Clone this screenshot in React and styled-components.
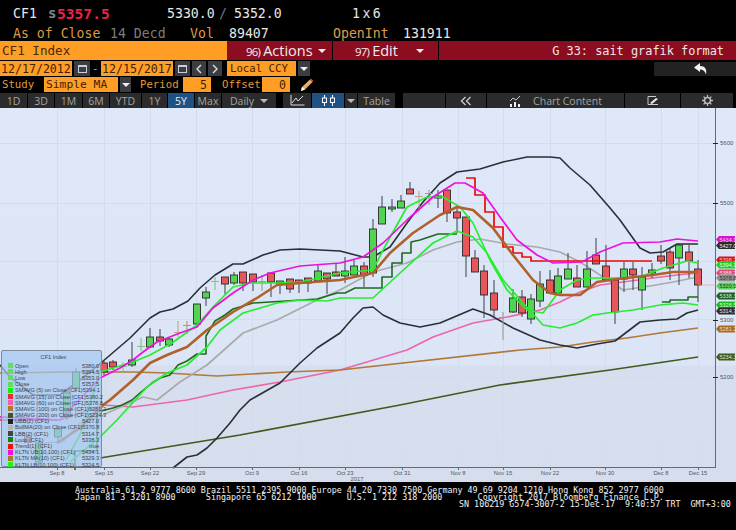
import React from "react"
import styled, { createGlobalStyle } from "styled-components"

const GlobalStyle = createGlobalStyle`
  html, body { margin: 0; padding: 0; background: #000; }
  #root { width: 736px; height: 530px; overflow: hidden; }
`

const mono = `"DejaVu Sans Mono", "Liberation Mono", monospace`
const sans = `"Open Sans", "Liberation Sans", sans-serif`
const orange = "#ff9d25"

const Page = styled.div`
  width: 736px;
  height: 530px;
  background: #000;
  display: flex;
  flex-direction: column;
  overflow: hidden;
`

const QuoteRow = styled.div`
  height: ${p => p.$h}px;
  display: flex;
  align-items: center;
  padding-left: 13px;
  font-family: ${mono};
  font-size: 13.2px;
  white-space: pre;
`

const Quote = styled.span`
  width: ${p => p.$w}px;
  flex: none;
  color: ${p => p.$color || "#e8e8e8"};
  font-weight: ${p => (p.$bold ? 700 : 400)};
  font-size: ${p => p.$size || 13.2}px;
  word-spacing: ${p => p.$tight ? -5.5 : 0}px;
`

const TitleRow = styled.div`
  height: 19px;
  display: flex;
`

const IndexBox = styled.div`
  width: 227px;
  background: ${orange};
  color: #4b2a05;
  font-family: ${mono};
  font-size: 12.6px;
  line-height: 20px;
  padding-left: 2px;
  box-sizing: border-box;
`

const MenuButton = styled.div`
  width: ${p => p.$w}px;
  margin-right: 1px;
  padding-left: ${p => p.$pad}px;
  box-sizing: border-box;
  background: #8c0c20;
  color: #eee;
  font-family: ${sans};
  font-size: 14.5px;
  white-space: nowrap;
  display: flex;
  align-items: center;
  gap: ${p => p.$gap}px;
`

const MenuNumber = styled.span`
  font-size: 11.5px;
  letter-spacing: -0.8px;
  margin-right: 3px;
`

const Caret = styled.span`
  width: 0;
  height: 0;
  border-left: 4px solid transparent;
  border-right: 4px solid transparent;
  border-top: 4px solid ${p => p.$color || "#eee"};
`

const FormatTitle = styled.div`
  flex: 1;
  background: #8c0c20;
  color: #f0e6e6;
  font-family: ${mono};
  font-size: 11.9px;
  line-height: 21px;
  text-align: right;
  padding-right: 12px;
`

const FormRow = styled.div`
  height: ${p => p.$h}px;
  display: flex;
  align-items: center;
  gap: 2px;
`

const Field = styled.div`
  width: ${p => p.$w}px;
  height: 15px;
  margin-left: ${p => p.$ml || 0}px;
  background: ${orange};
  color: #3e2304;
  font-family: ${mono};
  font-size: ${p => p.$size || 11.6}px;
  line-height: 16px;
  white-space: pre;
  text-align: ${p => p.$align || "left"};
  padding: 0 ${p => (p.$align ? 4 : p.$pad || 1)}px;
  box-sizing: border-box;
  flex: none;
`

const SmallButton = styled.div`
  width: ${p => p.$w || 15}px;
  height: 15px;
  margin-left: ${p => p.$ml || 0}px;
  background: ${p => (p.$bare ? "none" : "#3a3d42")};
  color: #ddd;
  display: flex;
  align-items: center;
  justify-content: center;
  flex: none;
`

const Label = styled.span`
  width: ${p => p.$w}px;
  margin-left: ${p => p.$ml || 0}px;
  flex: none;
  color: #e09a3c;
  font-family: ${mono};
  font-size: 10.7px;
  white-space: pre;
`

const BackButton = styled.div`
  width: 82px;
  height: 14px;
  margin-left: auto;
  background: #222;
  display: flex;
  align-items: center;
  justify-content: center;
  padding-left: 12px;
  box-sizing: border-box;
`

const TabRow = styled.div`
  height: 16px;
  display: flex;
  padding-top: 1px;
  box-sizing: border-box;
`

const Tab = styled.div`
  width: ${p => p.$w}px;
  margin-left: ${p => p.$ml || 0}px;
  margin-right: 1px;
  flex: none;
  background: ${p => (p.$active ? "#1f5284" : "#2b2b2b")};
  color: ${p => (p.$active ? "#e8eef5" : "#a5a5a5")};
  font-family: ${sans};
  font-size: 10.5px;
  display: flex;
  align-items: center;
  justify-content: center;
  gap: ${p => p.$gap || 6}px;
`

const ChartPanel = styled.div`
  position: relative;
  height: 374px;
  background: linear-gradient(#dfe8f9 0, #dbe5f6 257px, #d6dfef 258px, #d6deee 100%);
`

const ChartSvg = styled.svg`
  display: block;
  font-family: "Liberation Sans", sans-serif;
`

const Legend = styled.div`
  position: absolute;
  left: 1px;
  top: 242px;
  width: 101px;
  height: 117px;
  box-sizing: border-box;
  padding: 3px 2px 0 6px;
  background: rgba(165, 200, 240, 0.72);
  border: 1px solid #7d8a98;
  border-radius: 2px;
  font-family: "Liberation Sans", sans-serif;
  font-size: 5.6px;
  color: #37434f;
`

const LegendTitle = styled.div`
  text-align: center;
  height: 7px;
  line-height: 7px;
  margin-bottom: 1.5px;
`

const LegendRow = styled.div`
  display: flex;
  align-items: center;
  height: 6.2px;
  white-space: pre;
`

const Swatch = styled.span`
  width: 5px;
  height: 5px;
  margin-right: 2px;
  flex: none;
  background: ${p => p.$color};
`

const LegendValue = styled.span`
  margin-left: auto;
`

const Footer = styled.div`
  flex: 1;
  padding-top: 5px;
  font-family: ${mono};
  font-size: 8.37px;
  line-height: 7px;
  color: #f2f2f2;
  white-space: pre;
`

const FooterLine = styled.div`
  padding-left: ${p => p.$left}px;
`

const CalendarIcon = () => (
  <svg width="9" height="9" viewBox="0 0 9 9">
    <rect x="0.5" y="1.5" width="8" height="7" fill="none" stroke="#ccd" />
    <rect x="0.5" y="1" width="8" height="2" fill="#ccd" />
  </svg>
)

const Arrow = ({ left }) => (
  <svg width="8" height="10" viewBox="0 0 8 10">
    <path d={left ? "M6 1 L2 5 L6 9" : "M2 1 L6 5 L2 9"} fill="none" stroke="#ddd" strokeWidth="1.4" />
  </svg>
)

const DoubleArrow = () => (
  <svg width="12" height="10" viewBox="0 0 12 10">
    <path d="M5.5 1 L1.5 5 L5.5 9 M10.5 1 L6.5 5 L10.5 9" fill="none" stroke="#ccc" strokeWidth="1.3" />
  </svg>
)

const TabCaret = () => <Caret $color="#bbb" />

const LineIcon = () => (
  <svg width="15" height="11" viewBox="0 0 15 11">
    <path d="M1 0 V10 H14.5" fill="none" stroke="#ddd" />
    <path d="M2 8 L6 3 L8 6 L13 1" fill="none" stroke="#ddd" />
  </svg>
)

const CandleIcon = () => (
  <svg width="15" height="11" viewBox="0 0 15 11">
    <path d="M3.5 0 V11 M11.5 0 V11" stroke="#fff" />
    <rect x="1.5" y="3" width="4" height="4.5" fill="#1f5284" stroke="#fff" />
    <rect x="9.5" y="3" width="4" height="4.5" fill="#1f5284" stroke="#fff" />
  </svg>
)

const StudyIcon = () => (
  <svg width="12" height="12" viewBox="0 0 12 12">
    <path d="M1 6 L4 3 L7 5 L11 1" fill="none" stroke="#ccc" />
    <path d="M1 9 H3 V12 H1 Z M5 7 H7 V12 H5 Z M9 9 H11 V12 H9 Z" fill="#eee" />
  </svg>
)

const EditIcon = () => (
  <svg width="12" height="9" viewBox="0 0 12 9">
    <path d="M1 0.5 H9 M1 0.5 V8.5 H11" fill="none" stroke="#ccc" />
    <path d="M3 7 L9 2 L11 3 L5 8 Z" fill="#eee" />
  </svg>
)

const GearIcon = () => (
  <svg width="11" height="11" viewBox="0 0 11 11">
    <circle cx="5.5" cy="5.5" r="3" fill="none" stroke="#bbb" strokeWidth="1.6" />
    <path d="M5.5 0 V2 M5.5 9 V11 M0 5.5 H2 M9 5.5 H11 M1.6 1.6 L3 3 M8 8 L9.4 9.4 M9.4 1.6 L8 3 M3 8 L1.6 9.4" stroke="#bbb" strokeWidth="1.3" />
  </svg>
)

const UndoIcon = () => (
  <svg width="14" height="12" viewBox="0 0 14 12">
    <path d="M0 4.5 L6 0 V3 C11 3 13 6 12 11.5 C11 8 9 6.5 6 6.5 V9 Z" fill="#f4f4f4" />
  </svg>
)

const PencilIcon = () => (
  <svg width="14" height="14" viewBox="0 0 14 14">
    <path d="M1 13 L2 9 L10 1.5 L12.5 4 L5 11.5 Z" fill="#e8b060" />
    <path d="M1 13 L2 9 L5 11.5 Z" fill="#fff" />
    <path d="M10 1.5 L12.5 4 L13.5 3 L11 0.5 Z" fill="#d84a20" />
  </svg>
)

const tabs = [
  ["1D", 27], ["3D", 26], ["1M", 27], ["6M", 26], ["YTD", 31], ["1Y", 25], ["5Y", 26, true], ["Max", 26],
]

const upper = "0,365 10,377 33,395 60,395 80,380 102,362 130,338 150,318 160,312 173,309 188,301 200,288 215,275 233,264 243,264 263,255 280,250 300,249 340,251 363,257 373,257 390,247 407,223 423,202 440,183 457,172 480,169 503,162 527,157 550,157 560,158 570,168 590,185 610,208 620,220 640,248 650,253 663,252 677,244 698,244"
const lower = "173,468 187,457 197,455 207,448 217,438 230,423 240,410 250,400 280,383 300,363 317,348 340,333 353,318 363,308 373,307 383,315 400,323 420,327 440,323 473,309 490,315 513,328 540,340 560,345 577,348 597,344 615,341 640,322 660,320 677,319 687,313 698,310"
const magenta = "0,417 60,420 100,378 120,368 133,360 143,352 157,342 180,333 197,327 213,308 233,293 253,280 270,273 300,266 340,263 363,257 383,243 407,220 433,197 455,183 465,183 483,193 500,217 517,240 537,255 553,263 582,262 600,252 623,243 660,242 677,239 698,241"
const brownThick = "57,443 80,428 103,405 110,400 133,380 150,363 167,355 187,347 207,330 233,312 257,298 277,285 300,283 340,280 373,273 390,253 413,233 440,215 457,207 473,210 493,228 513,255 533,280 550,293 560,295 580,295 597,282 617,279 653,275 673,272 698,272"
const greenUpper = "66,460 80,435 100,372 133,362 150,355 172,343 197,325 213,307 233,287 250,283 277,283 300,282 340,273 373,270 383,250 407,207 427,197 443,197 460,207 473,223 490,260 507,290 527,310 543,313 560,290 577,280 593,278 617,278 640,277 663,268 687,261 698,263"
const greenLower = "70,462 100,437 117,420 147,387 167,373 187,365 207,347 220,330 243,313 277,303 300,300 327,301 340,298 373,298 400,273 433,243 457,231 473,237 487,253 503,280 523,303 543,325 560,328 577,323 593,315 607,313 633,310 660,305 683,303 698,305"
const gray = "40,443 63,442 80,423 103,415 143,397 157,400 180,382 207,365 243,333 277,320 313,302 340,290 373,272 407,263 433,250 457,242 480,239 507,244 537,247 560,252 580,262 600,275 623,290 650,286 673,282 698,277"
const pink = "0,417 60,420 103,405 133,407 187,400 233,390 280,382 340,370 407,350 433,337 473,323 507,317 540,310 560,302 580,292 600,285 623,282 653,278 677,275 698,273"
const brown = "0,373 67,372 133,372 167,373 217,376 287,372 340,370 520,350 560,347 593,342 627,338 660,333 698,328"
const darkGreen = "100,458 240,435 400,405 500,385 610,370 698,357"
const steps = "75,470 75,451 97,451 97,412 113,408 122,405 132,400 141,392 152,383 160,378 170,375 178,365 187,361 197,354 206,354 206,336 215,321 225,315 233,309 243,306 253,303 270,302 317,299 337,293 345,293 355,288 382,288 382,277 392,277 392,263 402,263 402,253 411,253 411,242 420,240 429,237 438,234 457,234"
const stepsEnd = "662,302 670,302 670,300 688,300 688,297 698,297"
const redSteps = "466,178 475,178 475,195 485,195 485,212 494,212 494,227 503,227 503,247 513,247 513,253 522,253 522,257 531,257 531,261 652,261"

const lines = [
  { points: pink, color: "#ee66aa", width: 1.7 },
  { points: brown, color: "#b0793a", width: 1.7 },
  { points: darkGreen, color: "#3f5a1c", width: 1.6 },
  { points: gray, color: "#aaaaaa", width: 1.7 },
  { points: lower, color: "#2b2f33", width: 1.6 },
  { points: upper, color: "#2b2f33", width: 1.6 },
  { points: steps, color: "#1d6a1d", width: 1.6 },
  { points: stepsEnd, color: "#1d6a1d", width: 1.6 },
]

const topLines = [
  { points: greenLower, color: "#25ee30", width: 1.7 },
  { points: redSteps, color: "#ee0808", width: 1.7 },
  { points: greenUpper, color: "#25ee30", width: 1.7 },
  { points: magenta, color: "#ee10dc", width: 1.7 },
  { points: brownThick, color: "#b0602a", width: 2.6 },
]

// x, body top, body bottom, wick top, wick bottom, kind
const candles = [
  [28, 437, 442, 434, 445, "r"], [39, 443, 462, 440, 466, "g"], [58, 429, 437, 425, 442, "g"], [67, 393, 417, 388, 420, "g"], [76, 372, 388, 368, 392, "g"],
  [104, 363, 372, 361, 375, "r"], [113, 362, 367, 360, 370, "r"], [123, 366, 367, 362, 373, "x"], [132, 360, 365, 342, 367, "g"],
  [141, 346, 347, 338, 351, "x"], [150, 337, 347, 328, 348, "g"], [160, 337, 341, 329, 346, "r"], [169, 339, 345, 337, 347, "g"],
  [178, 332, 333, 321, 337, "t"], [187, 325, 326, 321, 334, "o"], [197, 304, 324, 304, 327, "g"], [206, 292, 298, 287, 306, "g"],
  [215, 281, 282, 277, 290, "x"], [225, 277, 284, 277, 294, "r"], [234, 275, 283, 272, 285, "g"], [243, 272, 283, 272, 291, "r"],
  [253, 274, 282, 274, 291, "r"], [262, 281, 282, 275, 291, "y"], [271, 273, 282, 273, 297, "r"], [280, 281, 283, 281, 294, "g"],
  [290, 279, 289, 279, 293, "r"], [299, 280, 283, 280, 293, "r"], [308, 278, 283, 278, 292, "r"], [318, 271, 281, 265, 281, "g"],
  [327, 273, 279, 273, 294, "r"], [336, 272, 276, 264, 276, "r"], [345, 271, 276, 257, 283, "g"], [354, 266, 275, 260, 275, "g"],
  [364, 266, 275, 262, 287, "r"], [373, 229, 273, 219, 277, "g"], [382, 207, 224, 196, 224, "g"], [392, 207, 209, 199, 212, "g"],
  [401, 201, 208, 195, 208, "g"], [410, 189, 194, 182, 194, "r"], [419, 196, 197, 191, 212, "t"], [429, 193, 194, 190, 205, "y"],
  [438, 196, 198, 190, 208, "g"], [447, 190, 213, 190, 222, "r"], [457, 212, 218, 207, 233, "r"], [466, 217, 256, 217, 277, "r"],
  [475, 258, 272, 250, 272, "r"], [484, 271, 295, 265, 318, "r"], [494, 293, 310, 280, 318, "r"], [503, 317, 318, 312, 340, "y"],
  [513, 298, 312, 289, 313, "g"], [522, 297, 313, 290, 317, "r"], [531, 299, 319, 294, 324, "g"], [540, 284, 301, 271, 307, "g"],
  [550, 280, 293, 270, 293, "r"], [558, 276, 293, 268, 293, "g"], [568, 269, 279, 253, 279, "g"], [577, 278, 287, 265, 287, "r"],
  [587, 269, 287, 251, 287, "g"], [596, 255, 264, 238, 264, "r"], [606, 266, 280, 245, 280, "r"], [615, 280, 312, 280, 324, "r"],
  [624, 269, 279, 262, 292, "g"], [633, 269, 275, 262, 290, "r"], [642, 277, 290, 267, 310, "g"], [652, 270, 273, 263, 278, "g"],
  [661, 256, 261, 245, 264, "r"], [670, 252, 268, 248, 280, "r"], [679, 245, 258, 243, 285, "g"], [689, 252, 261, 245, 278, "r"],
  [698, 269, 285, 260, 302, "r"],
]

const crossColors = { x: "#7fc47f", t: "#b9a98a", o: "#d88a55", y: "#9a9a9a" }

const dates = [
  ["Sep 8", 57], ["Sep 15", 104], ["Sep 22", 150], ["Sep 29", 196], ["Oct 9", 252], ["Oct 16", 299], ["Oct 23", 345],
  ["Oct 31", 402], ["Nov 8", 458], ["Nov 15", 503], ["Nov 22", 550], ["Nov 30", 605], ["Dec 8", 661], ["Dec 15", 698],
]

const chips = [
  [239.5, "#e010d0", "5434.1", "#f0c0ee"], [245.5, "#2a2a2a", "5427.0", "#e8e8e8"], [260, "#dd1111", "5398.2", "#f5c0c0"],
  [265, "#22cc22", "5394.1", "#e8ffe8"], [273, "#e04a7a", "5388.2", "#ffe0e8"], [278, "#8f8f8f", "5378.8", "#333"],
  [286, "#5fd05f", "5320.5", "#1c3c1c"], [296, "#1d5c1d", "5338.3", "#d8efd8"], [305, "#18bb22", "5326.5", "#d0ffd0"],
  [311, "#2d2d33", "5314.7", "#e0e0e0"], [329, "#a5682a", "5281.2", "#f4dcb8"], [357, "#3f5a1c", "5234.3", "#dfe8cc"],
]

const legend = [
  ["Open", "#62dc62", "5380.0"], ["High", "#62dc62", "5394.5"], ["Low", "#62dc62", "5353.0"], ["Close", "#62dc62", "5357.5"],
  ["SMAVG (5) on Close (CF1)", "#11f011", "5394.1"], ["SMAVG (15) on Close (CF1)", "#e03040", "5380.2"],
  ["SMAVG (60) on Close (CF1)", "#ee60b0", "5378.8"], ["SMAVG (100) on Close (CF1)", "#b07a30", "5281.2"],
  ["SMAVG (200) on Close (CF1)", "#3f5a1c", "5234.3"], ["UBB(2) (CF1)", "#222", "5427.0"],
  ["BollMA(20) on Close (CF1)", "#b5b5a8", "5370.8"], ["LBB(2) (CF1)", "#3a4a3a", "5314.7"], ["Loop (CF1)", "#168016", "5338.3"],
  ["Trend(1) (CF1)", "#ee1010", "true"], ["KLTN UB(10,100) (CF1)", "#ee10dc", "5434.1"], ["KLTN MA(10) (CF1)", "#a08020", "5329.3"],
  ["KLTN LB(10,100) (CF1)", "#22f022", "5324.5"],
]

const Candle = ({ data }) => {
  const [x, top, bottom, high, low, kind] = data
  const cross = crossColors[kind]
  if (cross) {
    return (
      <path d={`M${x} ${high} V${low} M${x - 4} ${top}.5 H${x + 4}`} stroke={cross} strokeWidth="1.1" fill="none" />
    )
  }
  return (
    <g>
      <path d={`M${x} ${high} V${low}`} stroke="#3c4044" strokeWidth="1" />
      <rect x={x - 3.5} y={top} width="7" height={bottom - top} fill={kind === "g" ? "#52d452" : "#e8565a"} stroke="#2c2c2c" strokeWidth="0.9" />
    </g>
  )
}

const Chart = () => (
  <ChartSvg width="736" height="374" viewBox="0 108 736 374">
    {[143, 203, 261, 319, 377].map(y => (
      <path key={y} d={`M0 ${y}.5 H715`} stroke="#d2dcec" strokeWidth="1" />
    ))}
    {dates.map(([, x]) => (
      <path key={x} d={`M${x}.5 108 V467`} stroke="#d2dcec" strokeWidth="1" />
    ))}
    {lines.map(l => (
      <polyline key={l.points} points={l.points} fill="none" stroke={l.color} strokeWidth={l.width} strokeLinejoin="round" />
    ))}
    <path d="M0 420 H57" stroke="#d8204a" strokeWidth="1.4" />
    {candles.map(c => (
      <Candle key={c[0]} data={c} />
    ))}
    {topLines.map(l => (
      <polyline key={l.points} points={l.points} fill="none" stroke={l.color} strokeWidth={l.width} strokeLinejoin="round" />
    ))}
    <path d="M715.5 108 V467 M0 467.5 H716" stroke="#5f6c7e" strokeWidth="1" fill="none" />
    <path d="M698 285 H716" stroke="#e8a090" strokeWidth="0.7" />
    {dates.map(([label, x]) => (
      <g key={label}>
        <path d={`M${x}.5 467 V470`} stroke="#5f6c7e" />
        <text x={x} y="475" fontSize="5.8" fill="#4d5866" textAnchor="middle">{label}</text>
      </g>
    ))}
    <text x="357" y="481" fontSize="5.8" fill="#4d5866" textAnchor="middle">2017</text>
    {[[143, "5600"], [203, "5500"], [320, "5300"], [377, "5200"]].map(([y, label]) => (
      <g key={label}>
        <path d={`M713 ${y}.5 H718`} stroke="#222" />
        <text x="720" y={y + 2} fontSize="6" fill="#4d5866">{label}</text>
      </g>
    ))}
    {chips.map(([y, fill, label, color]) => (
      <g key={label}>
        <path d={`M716 ${y} L719 ${y - 3.5} H735 V${y + 3.5} H719 Z`} fill={fill} />
        <text x="719.5" y={y + 2} fontSize="5.5" fill={color}>{label}</text>
      </g>
    ))}
  </ChartSvg>
)

const App = () => (
  <Page>
    <GlobalStyle />
    <QuoteRow $h={26}>
      <Quote $w={35}>CF1</Quote>
      <Quote $w={9} $bold $color="#7a8a8a" $size={14}>s</Quote>
      <Quote $w={110} $bold $color="#e8224a" $size={14.6}>5357.5</Quote>
      <Quote $w={52}>5330.0</Quote>
      <Quote $w={15} $color="#777">/</Quote>
      <Quote $w={118}>5352.0</Quote>
      <Quote $w={60} $tight>1 x 6</Quote>
    </QuoteRow>
    <QuoteRow $h={15}>
      <Quote $w={97} $color="#dd9a45">As of Close</Quote>
      <Quote $w={80} $color="#7d7d7d">14 Decd</Quote>
      <Quote $w={39} $color="#dd9a45">Vol</Quote>
      <Quote $w={104}>89407</Quote>
      <Quote $w={70} $color="#dd9a45">OpenInt</Quote>
      <Quote $w={60}>131911</Quote>
    </QuoteRow>
    <TitleRow>
      <IndexBox>CF1 Index</IndexBox>
      <MenuButton $w={105} $pad={19} $gap={5}>
        <span><MenuNumber>96)</MenuNumber>Actions</span>
        <Caret />
      </MenuButton>
      <MenuButton $w={105} $pad={22} $gap={18}>
        <span><MenuNumber>97)</MenuNumber>Edit</span>
        <Caret />
      </MenuButton>
      <FormatTitle>G 33: sait grafik format</FormatTitle>
    </TitleRow>
    <FormRow $h={17}>
      <Field $w={72}>12/17/2012</Field>
      <SmallButton $w={16}><CalendarIcon /></SmallButton>
      <Label $w={7}>-</Label>
      <Field $w={72}>12/15/2017</Field>
      <SmallButton $w={15}><CalendarIcon /></SmallButton>
      <SmallButton $w={14}><Arrow left /></SmallButton>
      <SmallButton $w={14}><Arrow /></SmallButton>
      <Field $w={69} $ml={3} $size={10.7} $pad={3}>Local CCY</Field>
      <SmallButton $w={12}><Caret /></SmallButton>
      <BackButton><UndoIcon /></BackButton>
    </FormRow>
    <FormRow $h={15}>
      <Label $w={40} $ml={2}>Study</Label>
      <Field $w={74} $size={11.3} $pad={2}>Simple MA</Field>
      <SmallButton $w={11}><Caret /></SmallButton>
      <Label $w={41} $ml={7}>Period</Label>
      <Field $w={28} $align="right">5</Field>
      <Label $w={38} $ml={9}>Offset</Label>
      <Field $w={28} $align="right">0</Field>
      <SmallButton $bare $w={14} $ml={8}><PencilIcon /></SmallButton>
    </FormRow>
    <TabRow>
      {tabs.map(([label, w, active]) => (
        <Tab key={label} $w={w} $active={active}>{label}</Tab>
      ))}
      <Tab $w={54}>Daily <TabCaret /></Tab>
      <Tab $w={28} $ml={6}><LineIcon /></Tab>
      <Tab $w={32} $active><CandleIcon /></Tab>
      <Tab $w={12}><TabCaret /></Tab>
      <Tab $w={37}>Table</Tab>
      <Tab $w={42} $ml={7} />
      <Tab $w={40}><DoubleArrow /></Tab>
      <Tab $w={137} $gap={12}><StudyIcon />Chart Content</Tab>
      <Tab $w={55}><EditIcon /></Tab>
      <Tab $w={52}><GearIcon /></Tab>
    </TabRow>
    <ChartPanel>
      <Chart />
      <Legend>
        <LegendTitle>CF1 Index</LegendTitle>
        {legend.map(([name, color, value]) => (
          <LegendRow key={name}>
            <Swatch $color={color} />
            {name}
            <LegendValue>{value}</LegendValue>
          </LegendRow>
        ))}
      </Legend>
    </ChartPanel>
    <Footer>
      <FooterLine $left={75}>Australia 61 2 9777 8600 Brazil 5511 2395 9000 Europe 44 20 7330 7500 Germany 49 69 9204 1210 Hong Kong 852 2977 6000</FooterLine>
      <FooterLine $left={75}>Japan 81 3 3201 8900      Singapore 65 6212 1000      U.S. 1 212 318 2000       Copyright 2017 Bloomberg Finance L.P.</FooterLine>
      <FooterLine $left={459}>SN 106219 G574-3007-2 15-Dec-17  9:40:57 TRT  GMT+3:00</FooterLine>
    </Footer>
  </Page>
)

export default App
